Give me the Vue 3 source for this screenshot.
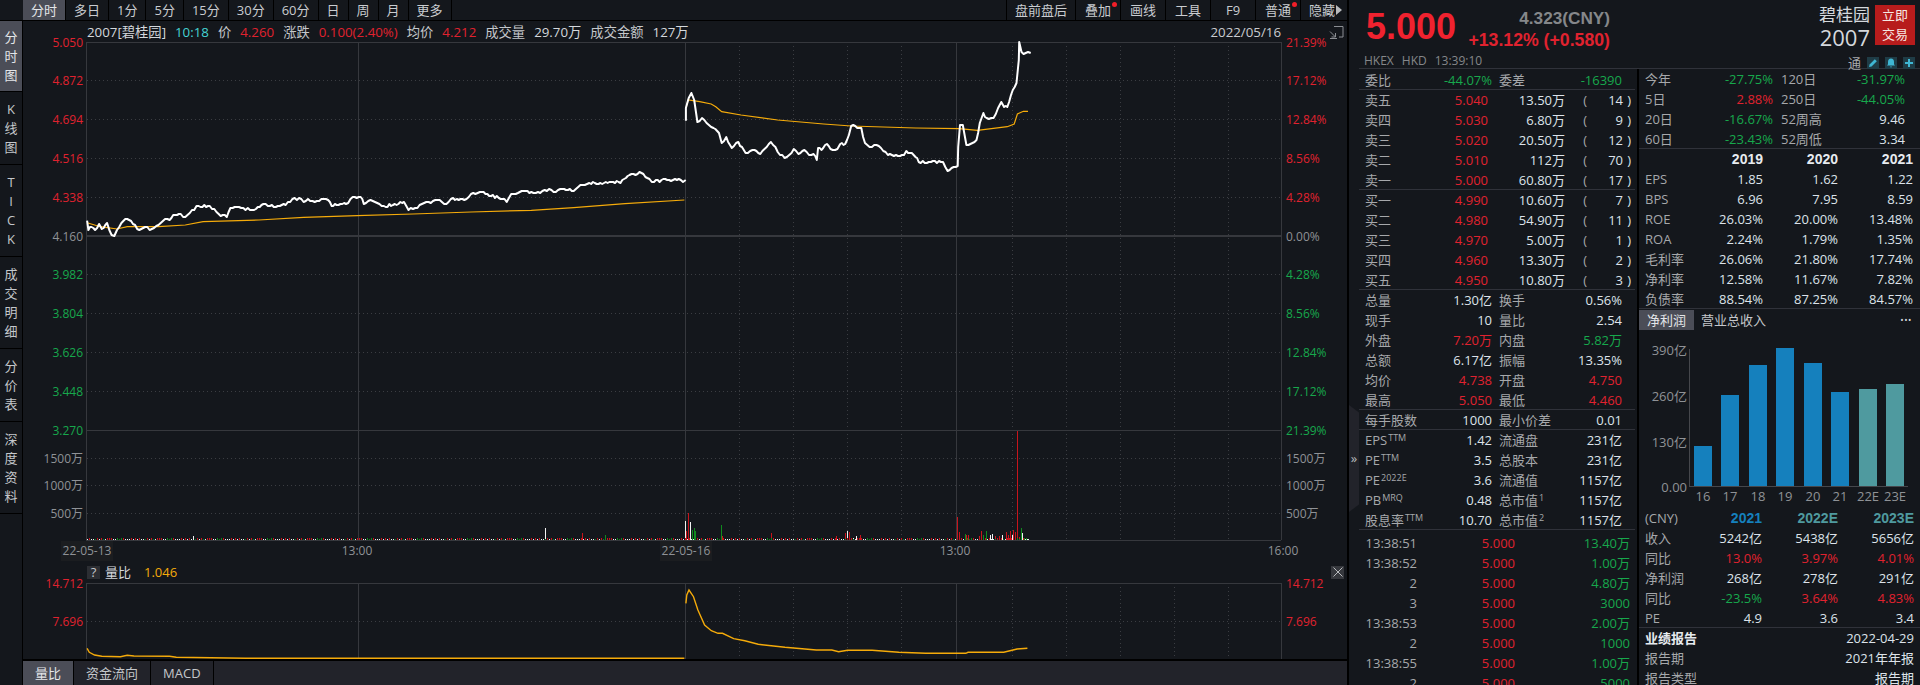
<template>
  <div class="screen">
    <div class="left">
      <div class="toolbar">
        <div class="tools">
          <span v-for="(t, i) in periods" :key="t" class="tool" :class="{ on: i === 0 }">{{ t }}</span>
        </div>
        <div class="tools right-tools">
          <span class="tool">盘前盘后</span>
          <span class="tool wide dot">叠加</span>
          <span class="tool wide">画线</span>
          <span class="tool wide">工具</span>
          <span class="tool wide">F9</span>
          <span class="tool wide dot">普通</span>
          <span class="tool wide hide">隐藏<i class="tri"></i></span>
        </div>
      </div>
      <div class="work">
        <div class="sidebar">
          <div
            v-for="(s, i) in sideTabs"
            :key="s.text"
            class="side-tab"
            :class="{ on: i === 0 }"
            :style="{ height: s.h + 'px' }"
          >
            <span v-for="(c, j) in s.text" :key="j">{{ c }}</span>
          </div>
        </div>
        <div class="center">
          <div class="info">
            <span class="w">2007[碧桂园]</span>
            <span class="cyan">10:18</span>
            <span>价</span><span class="red">4.260</span>
            <span>涨跌</span><span class="red">0.100(2.40%)</span>
            <span>均价</span><span class="red">4.212</span>
            <span>成交量</span><span class="w">29.70万</span>
            <span>成交金额</span><span class="w">127万</span>
            <span class="date">2022/05/16</span>
            <svg class="screen-ico" width="15" height="14" viewBox="0 0 15 14" fill="none" stroke="#8b8e93">
              <path d="M5 1.5h9v10.5h-4M1 13.5h7M1 6.5l5.5 5.5M6.5 8v4h-4" />
            </svg>
          </div>

          <svg class="plot" width="1324" height="519" viewBox="23 42 1324 519">
            <rect x="61" y="541" width="52" height="20" fill="#1b1d20" />
            <rect x="660" y="541" width="52" height="20" fill="#1b1d20" />
            <line v-for="y in dottedY" :key="y" x1="87" x2="1281" :y1="y" :y2="y" class="dots" />
            <line v-for="x in dottedX" :key="x" :x1="x" :x2="x" y1="42" y2="540" class="dots" />
            <line v-for="x in solidX" :key="x" :x1="x" :x2="x" y1="42" y2="540" class="solid" />
            <line x1="86" x2="1281" y1="42.5" y2="42.5" class="solid" />
            <line x1="86" x2="1281" y1="236" y2="236" class="solid thick" />
            <line x1="86" x2="1281" y1="430.5" y2="430.5" class="solid" />
            <line x1="86" x2="1281" y1="540.5" y2="540.5" class="solid" />

            <polyline :points="avgA" class="avg" />
            <polyline :points="avgB" class="avg" />
            <polyline :points="priceA" class="price" />
            <polyline :points="priceB" class="price" />

            <path :d="bars.w" stroke="#f2f2f2" class="bar" />
            <path :d="bars.r" stroke="#c8141c" class="bar" />
            <path :d="bars.g" stroke="#108a1e" class="bar" />

            <text v-for="l in leftAxis" :key="l.y" x="83" :y="l.y" text-anchor="end" class="lbl" :fill="l.c">{{ l.t }}</text>
            <text v-for="l in rightAxis" :key="l.y" x="1286" :y="l.y" class="lbl" :fill="l.c">{{ l.t }}</text>
            <text v-for="l in timeAxis" :key="l.x" :x="l.x" y="550" text-anchor="middle" class="lbl" fill="#8f9296">{{ l.t }}</text>
          </svg>

          <div class="subhead">
            <span class="q">?</span>
            <span class="w">量比</span>
            <span class="gold">1.046</span>
            <span class="x-btn">
              <svg width="10" height="10" viewBox="0 0 10 10" stroke="#b8babd" fill="none"><path d="M0.5 0.5l9 9M9.5 0.5l-9 9" /></svg>
            </span>
          </div>

          <svg class="plot" width="1324" height="78" viewBox="23 583 1324 78">
            <line x1="87" x2="1281" y1="621.5" y2="621.5" class="dots" />
            <line v-for="x in dottedX" :key="x" :x1="x" :x2="x" y1="583" y2="659" class="dots" />
            <line v-for="x in solidX" :key="x" :x1="x" :x2="x" y1="583" y2="659" class="solid" />
            <line x1="86" x2="1281" y1="583.5" y2="583.5" class="solid" />
            <polyline :points="ratioA" class="ratio" />
            <polyline :points="ratioB" class="ratio" />
            <text x="83" y="583.5" text-anchor="end" class="lbl" fill="#e0222f">14.712</text>
            <text x="83" y="621.5" text-anchor="end" class="lbl" fill="#e0222f">7.696</text>
            <text x="1286" y="583.5" class="lbl" fill="#e0222f">14.712</text>
            <text x="1286" y="621.5" class="lbl" fill="#e0222f">7.696</text>
          </svg>

          <div class="bottom-tabs">
            <span class="btab on">量比</span>
            <span class="btab">资金流向</span>
            <span class="btab">MACD</span>
          </div>
        </div>
      </div>
    </div>

    <div class="panel">
      <div class="gutter"><span class="handle">»</span></div>
      <div class="panel-main">
        <div class="quote">
          <div class="quote-left">
            <div class="quote-top">
              <span class="big">5.000</span>
              <div class="quote-sub">
                <span class="cny">4.323(CNY)</span>
                <span class="chg">+13.12% (+0.580)</span>
              </div>
            </div>
            <div class="market"><span>HKEX</span><span>HKD</span><span>13:39:10</span></div>
          </div>
          <div class="quote-right">
            <div class="name-line">
              <div class="name">
                <span class="cn">碧桂园</span>
                <span class="code">2007</span>
              </div>
              <div class="trade">立即<br />交易</div>
            </div>
            <div class="icons">
              <span class="tong">通</span>
              <span class="ico">
                <svg width="12" height="12" viewBox="0 0 12 12" fill="#3fb6d3"><path d="M2 10l0.6-2.6L7.8 2.2l2 2L4.6 9.4z" /></svg>
              </span>
              <span class="ico">
                <svg width="12" height="12" viewBox="0 0 12 12" fill="#3fb6d3"><path d="M6 1.5c2 0 3 1.5 3 3.4v2.3l1 1.3H2l1-1.3V4.900C3 3 4 1.500 6 1.500zM5 9.500h2l-1 1.200z" /></svg>
              </span>
              <span class="ico">
                <svg width="12" height="12" viewBox="0 0 12 12" fill="#3fb6d3"><path d="M5 2h2v3h3v2H7v3H5V7H2V5h3z" /></svg>
              </span>
            </div>
          </div>
        </div>

        <div class="cols">
          <div class="col-a">
            <div class="sec">
              <div class="row stat">
                <span class="k">委比</span><span class="v green">-44.07%</span>
                <span class="k">委差</span><span class="v green">-16390</span>
              </div>
            </div>
            <div v-for="(group, g) in book" :key="g" class="sec">
              <div v-for="r in group" :key="r[0]" class="row order">
                <span class="k">{{ r[0] }}</span>
                <span class="v red">{{ r[1] }}</span>
                <span class="v">{{ r[2] }}</span>
                <span class="k paren">(</span>
                <span class="v">{{ r[3] }}</span>
                <span class="v">)</span>
              </div>
            </div>
            <div class="sec">
              <div v-for="r in stats" :key="r[0]" class="row stat">
                <span class="k">{{ r[0] }}</span><span class="v" :class="r[2]">{{ r[1] }}</span>
                <span class="k">{{ r[3] }}</span><span class="v" :class="r[5]">{{ r[4] }}</span>
              </div>
            </div>
            <div class="sec">
              <div class="row stat">
                <span class="k">每手股数</span><span class="v">1000</span>
                <span class="k">最小价差</span><span class="v">0.01</span>
              </div>
            </div>
            <div class="sec">
              <div v-for="r in ratios" :key="r[0] + r[1]" class="row stat">
                <span class="k">{{ r[0] }}<sup>{{ r[1] }}</sup></span><span class="v">{{ r[2] }}</span>
                <span class="k">{{ r[3] }}<sup>{{ r[4] }}</sup></span><span class="v">{{ r[5] }}</span>
              </div>
            </div>
            <div class="ticks">
              <div v-for="(r, i) in ticks" :key="i" class="row tick">
                <span class="k">{{ r[0] }}</span>
                <span class="v red">5.000</span>
                <span class="v green">{{ r[1] }}</span>
              </div>
            </div>
          </div>

          <div class="col-b">
            <div class="sec">
              <div v-for="r in periodsPct" :key="r[0]" class="row stat-b">
                <span class="k">{{ r[0] }}</span><span class="v" :class="r[2]">{{ r[1] }}</span>
                <span class="k">{{ r[3] }}</span><span class="v" :class="r[5]">{{ r[4] }}</span>
              </div>
            </div>
            <div class="sec">
              <div class="row fin">
                <span></span><span class="v strong">2019</span><span class="v strong">2020</span><span class="v strong">2021</span>
              </div>
              <div v-for="r in finance" :key="r[0]" class="row fin">
                <span class="k">{{ r[0] }}</span><span class="v">{{ r[1] }}</span><span class="v">{{ r[2] }}</span><span class="v">{{ r[3] }}</span>
              </div>
            </div>
            <div class="chart-tabs">
              <span class="ctab on">净利润</span>
              <span class="ctab">营业总收入</span>
              <span class="more">•••</span>
            </div>
            <svg class="bars" width="281" height="178" viewBox="1639 330 281 178">
              <text v-for="l in barAxis" :key="l.t" x="1687" :y="l.y" text-anchor="end" class="blbl">{{ l.t }}</text>
              <line x1="1689.5" x2="1689.5" y1="349" y2="486" stroke="#45474c" />
              <line x1="1689" x2="1908" y1="486.5" y2="486.5" stroke="#45474c" />
              <rect
                v-for="b in barData"
                :key="b.t"
                :x="b.x"
                :y="b.y"
                width="18"
                :height="486 - b.y"
                :fill="b.est ? '#4f9a9f' : '#1580bd'"
              />
              <text v-for="b in barData" :key="'l' + b.t" :x="b.x + 9" y="496" text-anchor="middle" class="blbl">{{ b.t }}</text>
            </svg>
            <div class="sec">
              <div class="row tbl">
                <span class="k">(CNY)</span>
                <span class="v strong blue">2021</span><span class="v strong teal">2022E</span><span class="v strong teal">2023E</span>
              </div>
              <div v-for="(r, i) in forecast" :key="i" class="row tbl">
                <span class="k">{{ r[0] }}</span>
                <span class="v" :class="r[4]">{{ r[1] }}</span>
                <span class="v" :class="r[5]">{{ r[2] }}</span>
                <span class="v" :class="r[5]">{{ r[3] }}</span>
              </div>
            </div>
            <div class="report">
              <div class="row rep"><span class="w strong-cn">业绩报告</span><span class="v">2022-04-29</span></div>
              <div class="row rep"><span class="k">报告期</span><span class="v">2021年年报</span></div>
              <div class="row rep"><span class="k">报告类型</span><span class="v">报告期</span></div>
            </div>
          </div>
        </div>
      </div>
    </div>
  </div>
</template>

<script setup>
const periods = ['分时', '多日', '1分', '5分', '15分', '30分', '60分', '日', '周', '月', '更多']
const sideTabs = [
  { text: '分时图', h: 71 },
  { text: 'K线图', h: 73 },
  { text: 'TICK', h: 92 },
  { text: '成交明细', h: 92 },
  { text: '分价表', h: 73 },
  { text: '深度资料', h: 92 },
]

const RED = '#e0222f'
const GREEN = '#17a84c'
const GREY = '#8f9296'
const dottedY = [80.5, 119.5, 158.5, 197.5, 274.5, 313.5, 352.5, 391.5, 458.5, 485.5, 513.5]
const dottedX = [739.5, 793.5, 847.5, 901.5, 1012.5, 1066.5, 1120.5, 1174.5, 1228.5]
const solidX = [86.5, 358.5, 685.5, 956.5, 1281.5]

const leftAxis = [
  { y: 42, t: '5.050', c: RED }, { y: 80.5, t: '4.872', c: RED }, { y: 119, t: '4.694', c: RED },
  { y: 158, t: '4.516', c: RED }, { y: 197, t: '4.338', c: RED }, { y: 236, t: '4.160', c: GREY },
  { y: 274, t: '3.982', c: GREEN }, { y: 313, t: '3.804', c: GREEN }, { y: 352, t: '3.626', c: GREEN },
  { y: 391, t: '3.448', c: GREEN }, { y: 430, t: '3.270', c: GREEN },
  { y: 458, t: '1500万', c: GREY }, { y: 485, t: '1000万', c: GREY }, { y: 513, t: '500万', c: GREY },
]
const rightAxis = [
  { y: 42, t: '21.39%', c: RED }, { y: 80.5, t: '17.12%', c: RED }, { y: 119, t: '12.84%', c: RED },
  { y: 158, t: '8.56%', c: RED }, { y: 197, t: '4.28%', c: RED }, { y: 236, t: '0.00%', c: GREY },
  { y: 274, t: '4.28%', c: GREEN }, { y: 313, t: '8.56%', c: GREEN }, { y: 352, t: '12.84%', c: GREEN },
  { y: 391, t: '17.12%', c: GREEN }, { y: 430, t: '21.39%', c: GREEN },
  { y: 458, t: '1500万', c: GREY }, { y: 485, t: '1000万', c: GREY }, { y: 513, t: '500万', c: GREY },
]
const timeAxis = [
  { x: 87, t: '22-05-13' }, { x: 357, t: '13:00' }, { x: 686, t: '22-05-16' }, { x: 955, t: '13:00' }, { x: 1283, t: '16:00' },
]

// traced from the crops: pairs of crop x,y turned back into page coordinates
const toPts = (raw, ox, sx) => {
  const out = []
  for (let i = 0; i < raw.length; i += 2) {
    out.push(`${(ox + raw[i] / sx).toFixed(1)},${(raw[i + 1] / 3).toFixed(1)}`)
  }
  return out.join(' ')
}
const toSub = (raw, ox) => {
  const out = []
  for (let i = 0; i < raw.length; i += 2) {
    out.push(`${(ox + raw[i] / 2.24).toFixed(1)},${(400 + raw[i + 1] / 3).toFixed(1)}`)
  }
  return out.join(' ')
}

// the price ticks every couple of pixels, so resample the trace and let it wobble
let wobble = 3
const rough = (line) => {
  const pts = line.split(' ').map((p) => p.split(',').map(Number))
  const out = [pts[0].join(',')]
  for (let i = 1; i < pts.length; i++) {
    const [x0, y0] = pts[i - 1]
    const [x1, y1] = pts[i]
    const n = Math.max(1, Math.round((x1 - x0) / 2))
    for (let k = 1; k <= n; k++) {
      wobble = (wobble * 37 + 17) % 97
      const off = k < n ? (wobble % 3) - 1 : 0
      const x = x0 + ((x1 - x0) * k) / n
      const y = Math.round(y0 + ((y1 - y0) * k) / n + off)
      out.push(`${x.toFixed(1)},${y}`)
    }
  }
  return out.join(' ')
}

const priceA = rough(toPts([
  195,662, 198,690, 205,680, 213,690, 222,672, 228,688, 240,668, 250,705, 256,708, 262,690, 272,668, 285,658,
  298,672, 312,690, 325,682, 340,688, 355,675, 365,662, 380,660, 388,645, 405,643, 415,650, 430,630, 445,617,
  470,617, 490,643, 508,650, 516,625, 545,625, 565,630, 590,612, 600,618, 640,615, 655,597, 675,597, 680,605,
  690,598, 705,605, 720,598, 735,600, 743,618, 750,612, 775,612, 790,592, 808,590, 815,612, 830,600, 840,605,
  860,618, 880,615, 905,605, 915,630, 930,625, 950,610, 965,608, 985,600, 1000,612, 1015,595, 1040,600, 1060,580,
  1075,575, 1100,588, 1130,598, 1135,605, 1145,582, 1160,578, 1190,575, 1210,578, 1230,566, 1240,575, 1255,568,
  1285,572, 1300,555, 1320,548, 1345,550, 1365,545, 1390,548, 1410,525, 1437,518, 1450,535, 1465,545, 1490,538,
  1525,540, 1530,545, 1536,540,
], 0, 2.24))
const priceB = rough(toPts([
  100,362, 100,325, 106,295, 112,278, 118,300, 125,365, 135,355, 150,375, 160,385, 172,400, 178,430, 188,410,
  200,445, 214,425, 230,460, 245,450, 262,462, 285,425, 295,440, 305,465, 320,472, 335,448, 345,462, 358,450,
  368,465, 378,462, 385,480, 388,445, 395,450, 407,432, 415,447, 430,447, 436,432, 447,432, 455,405, 460,378,
  482,385, 490,430, 505,440, 515,435, 525,445, 540,465, 575,465, 580,452, 600,470, 607,485, 660,485, 670,512,
  692,498, 693,440, 697,375, 703,375, 711,435, 733,420, 740,370, 748,340, 755,355, 770,355, 780,325, 787,305,
  793,320, 800,320, 808,285, 820,250, 825,180, 826,127, 831,157, 840,160, 845,155, 851,160,
], 640, 2.178))
const avgA = toPts([
  195,668, 225,680, 262,687, 285,680, 355,680, 415,675, 455,665, 580,660, 680,652, 800,647, 925,642, 1055,636,
  1190,631, 1285,623, 1400,611, 1533,600,
], 0, 2.24)
const avgB = toPts([
  100,325, 105,300, 130,305, 155,312, 165,320, 178,335, 220,345, 300,360, 400,372, 460,378, 600,384, 695,386,
  735,391, 800,380, 815,372, 822,342, 835,334, 845,334,
], 640, 2.178)
const ratioA = toSub([
  195,745, 200,757, 212,765, 228,769, 270,770, 285,766, 300,768, 380,769, 395,772, 550,775, 1533,775,
], 0)
const ratioB = toSub([
  58,610, 60,585, 65,570, 75,590, 85,630, 100,675, 115,692, 130,700, 140,700, 165,716, 190,722, 220,733, 280,742,
  350,750, 385,750, 400,755, 420,751, 475,751, 535,757, 595,760, 685,760, 690,757, 770,757, 800,747, 823,745,
], 660)

const tallBars = [
  [193, 4, 'w'], [545, 12, 'w'], [582, 7, 'r'], [605, 5, 'g'],
  [685, 19, 'w'], [686, 9, 'r'], [688, 27, 'r'], [690, 18, 'w'], [692, 10, 'g'], [694, 12, 'g'], [695, 9, 'g'],
  [721, 15, 'g'], [722, 4, 'r'], [771, 7, 'r'], [836, 4, 'r'], [845, 7, 'r'], [847, 9, 'w'], [849, 8, 'r'],
  [853, 2, 'w'], [856, 4, 'w'], [860, 5, 'r'], [957, 23, 'r'], [959, 8, 'r'], [965, 6, 'g'], [966, 5, 'r'],
  [968, 5, 'r'], [979, 4, 'r'], [981, 9, 'r'], [983, 5, 'g'], [986, 9, 'g'], [990, 5, 'w'], [992, 6, 'w'],
  [995, 4, 'r'], [999, 4, 'r'], [1002, 5, 'w'], [1006, 8, 'r'], [1008, 5, 'r'], [1010, 9, 'r'], [1012, 5, 'w'],
  [1013, 10, 'r'], [1015, 8, 'r'], [1017, 109, 'r'], [1019, 3, 'r'], [1021, 12, 'g'], [1022, 7, 'w'],
  [1024, 2, 'g'], [1026, 2, 'g'], [1028, 1, 'w'],
]
const bars = { w: '', r: '', g: '' }
let seed = 7
for (let x = 87; x < 1028; x += 2) {
  seed = (seed * 31 + 11) % 101
  const kind = seed % 5 === 0 ? 'g' : seed % 2 === 0 ? 'w' : 'r'
  bars[kind] += `M${x + 0.5} 540v-${1 + (seed % 2)}`
}
for (const [x, h, kind] of tallBars) bars[kind] += `M${x + 0.5} 540v-${h}`

const book = [
  [
    ['卖五', '5.040', '13.50万', '14'],
    ['卖四', '5.030', '6.80万', '9'],
    ['卖三', '5.020', '20.50万', '12'],
    ['卖二', '5.010', '112万', '70'],
    ['卖一', '5.000', '60.80万', '17'],
  ],
  [
    ['买一', '4.990', '10.60万', '7'],
    ['买二', '4.980', '54.90万', '11'],
    ['买三', '4.970', '5.00万', '1'],
    ['买四', '4.960', '13.30万', '2'],
    ['买五', '4.950', '10.80万', '3'],
  ],
]
const stats = [
  ['总量', '1.30亿', '', '换手', '0.56%', ''],
  ['现手', '10', '', '量比', '2.54', ''],
  ['外盘', '7.20万', 'red', '内盘', '5.82万', 'green'],
  ['总额', '6.17亿', '', '振幅', '13.35%', ''],
  ['均价', '4.738', 'red', '开盘', '4.750', 'red'],
  ['最高', '5.050', 'red', '最低', '4.460', 'red'],
]
const ratios = [
  ['EPS', 'TTM', '1.42', '流通盘', '', '231亿'],
  ['PE', 'TTM', '3.5', '总股本', '', '231亿'],
  ['PE', '2022E', '3.6', '流通值', '', '1157亿'],
  ['PB', 'MRQ', '0.48', '总市值', '1', '1157亿'],
  ['股息率', 'TTM', '10.70', '总市值', '2', '1157亿'],
]
const ticks = [
  ['13:38:51', '13.40万'], ['13:38:52', '1.00万'], ['2', '4.80万'], ['3', '3000'],
  ['13:38:53', '2.00万'], ['2', '1000'], ['13:38:55', '1.00万'], ['2', '5000'],
]
const periodsPct = [
  ['今年', '-27.75%', 'green', '120日', '-31.97%', 'green'],
  ['5日', '2.88%', 'red', '250日', '-44.05%', 'green'],
  ['20日', '-16.67%', 'green', '52周高', '9.46', ''],
  ['60日', '-23.43%', 'green', '52周低', '3.34', ''],
]
const finance = [
  ['EPS', '1.85', '1.62', '1.22'],
  ['BPS', '6.96', '7.95', '8.59'],
  ['ROE', '26.03%', '20.00%', '13.48%'],
  ['ROA', '2.24%', '1.79%', '1.35%'],
  ['毛利率', '26.06%', '21.80%', '17.74%'],
  ['净利率', '12.58%', '11.67%', '7.82%'],
  ['负债率', '88.54%', '87.25%', '84.57%'],
]
const barAxis = [
  { t: '390亿', y: 350 }, { t: '260亿', y: 396 }, { t: '130亿', y: 442 }, { t: '0.00', y: 487 },
]
const barData = [
  { t: '16', x: 1694, y: 446 }, { t: '17', x: 1721, y: 395 }, { t: '18', x: 1749, y: 365 }, { t: '19', x: 1776, y: 348 },
  { t: '20', x: 1804, y: 363 }, { t: '21', x: 1831, y: 392 }, { t: '22E', x: 1859, y: 389, est: true }, { t: '23E', x: 1886, y: 384, est: true },
]
const forecast = [
  ['收入', '5242亿', '5438亿', '5656亿', '', ''],
  ['同比', '13.0%', '3.97%', '4.01%', 'red', 'red'],
  ['净利润', '268亿', '278亿', '291亿', '', ''],
  ['同比', '-23.5%', '3.64%', '4.83%', 'green', 'red'],
  ['PE', '4.9', '3.6', '3.4', '', ''],
]
</script>

<style>
html, body {
  margin: 0;
  background: #14171c;
}
</style>

<style scoped>
.screen {
  display: flex;
  width: 1920px;
  height: 685px;
  overflow: hidden;
  background: #14171c;
  color: #a6a8ab;
  font: 13px/20px "Open Sans", "Noto Sans CJK SC", sans-serif;
}
.left {
  width: 1347px;
  flex: none;
  display: flex;
  flex-direction: column;
}
.toolbar {
  height: 21px;
  flex: none;
  box-sizing: border-box;
  display: flex;
  justify-content: space-between;
  padding-left: 23px;
  border-bottom: 1px solid #000;
}
.tools { display: flex; }
.tool {
  position: relative;
  padding: 0 8px;
  border-right: 1px solid #000;
  color: #c9ccd0;
  line-height: 20px;
}
.tool.on { background: #4b4d57; color: #e4e6e9; }
.right-tools .tool:first-child { border-left: 1px solid #000; }
.tool.wide {
  width: 44px;
  padding: 0;
  text-align: center;
}
.tool.dot::after {
  content: "";
  position: absolute;
  top: 2px;
  right: 3px;
  width: 5px;
  height: 5px;
  border-radius: 50%;
  background: #f01e28;
}
.tool.hide {
  width: 46px;
  border-right: 0;
  display: flex;
  align-items: center;
  padding-left: 8px;
  box-sizing: border-box;
  text-align: left;
}
.tri {
  margin-left: 1px;
  border-left: 6px solid #b8babd;
  border-top: 5px solid transparent;
  border-bottom: 5px solid transparent;
}
.work {
  flex: 1;
  display: flex;
  min-height: 0;
}
.sidebar {
  width: 23px;
  flex: none;
  box-sizing: border-box;
  border-right: 1px solid #000;
  display: flex;
  flex-direction: column;
}
.side-tab {
  flex: none;
  box-sizing: border-box;
  border-bottom: 1px solid #000;
  display: flex;
  flex-direction: column;
  align-items: center;
  justify-content: center;
  font-size: 13px;
  line-height: 19px;
  color: #c4c7cb;
}
.side-tab.on { background: #4b4d57; color: #e4e6e9; }
.center {
  width: 1324px;
  display: flex;
  flex-direction: column;
}
.info {
  height: 21px;
  flex: none;
  box-sizing: border-box;
  padding: 1px 0 0 64px;
  display: flex;
  align-items: center;
  gap: 9px;
  color: #c4c7cb;
  font-size: 13.3px;
}
.date { margin-left: auto; color: #c9ccd0; }
.screen-ico { margin: 0 3px 0 39px; }
.w { color: #d4d8dc; }
.cyan { color: #45d3d3; }
.red { color: #e0222f; }
.green { color: #17a84c; }
.gold { color: #f5ab0a; }
.plot {
  display: block;
  flex: none;
  overflow: visible;
}
.dots {
  stroke: #3b3d42;
  stroke-dasharray: 1 3;
}
.solid { stroke: #36383d; }
.thick { stroke-width: 2; }
.price {
  fill: none;
  stroke: #fff;
  stroke-width: 2;
  stroke-linejoin: round;
}
.avg {
  fill: none;
  stroke: #f5ab0a;
  stroke-width: 1.2;
}
.ratio {
  fill: none;
  stroke: #f5ab0a;
  stroke-width: 1.4;
}
.bar { fill: none; shape-rendering: crispEdges; }
.lbl {
  font-size: 12px;
  dominant-baseline: central;
}
.subhead {
  height: 22px;
  flex: none;
  box-sizing: border-box;
  padding: 0 3px 0 64px;
  display: flex;
  align-items: center;
  gap: 5px;
}
.subhead .gold { margin-left: 8px; }
.q {
  width: 13px;
  height: 13px;
  background: #2c2e33;
  color: #c4c7cb;
  text-align: center;
  line-height: 13px;
}
.x-btn {
  margin-left: auto;
  width: 13px;
  height: 13px;
  background: #36383d;
  display: flex;
  align-items: center;
  justify-content: center;
}
.bottom-tabs {
  flex: none;
  height: 26px;
  margin-top: -2px;
  box-sizing: border-box;
  border-top: 2px solid #000;
  background: #22232a;
  display: flex;
}
.btab {
  padding: 0 12px;
  border-right: 1px solid #000;
  line-height: 24px;
  color: #c4c7cb;
}
.btab.on { background: #4b4d57; color: #e4e6e9; }
.panel {
  flex: 1;
  display: flex;
  border-left: 2px solid #000;
  min-width: 0;
}
.gutter {
  width: 10px;
  flex: none;
  position: relative;
}
.handle {
  position: absolute;
  top: 405px;
  left: 0;
  width: 10px;
  height: 107px;
  background: #22232a;
  clip-path: polygon(0 0, 100% 7%, 100% 93%, 0 100%);
  color: #b8babd;
  font-size: 13px;
  line-height: 107px;
  text-align: center;
}
.panel-main {
  flex: 1;
  min-width: 0;
  display: flex;
  flex-direction: column;
}
.quote {
  height: 69px;
  flex: none;
  box-sizing: border-box;
  border-bottom: 1px solid #30323a;
  display: flex;
  justify-content: space-between;
  padding: 0 5px 0 5px;
}
.quote-top {
  display: flex;
  align-items: center;
  height: 50px;
  padding: 3px 0 0 2px;
  box-sizing: border-box;
}
.big {
  font: bold 36px/50px "Liberation Sans", sans-serif;
  color: #f0222f;
  width: 102px;
}
.quote-sub {
  width: 142px;
  display: flex;
  flex-direction: column;
  align-items: flex-end;
  font: bold 17.2px/22px "Liberation Sans", sans-serif;
  padding-top: 4px;
}
.cny { color: #85878a; }
.chg { color: #e0222f; font-size: 17.7px; white-space: nowrap; }
.market {
  display: flex;
  gap: 8px;
  color: #85878a;
  font-size: 12px;
  line-height: 22px;
}
.quote-right { display: flex; flex-direction: column; align-items: flex-end; padding-top: 5px; }
.name-line { display: flex; gap: 5px; }
.name {
  display: flex;
  flex-direction: column;
  align-items: flex-end;
  color: #d4d8dc;
}
.cn { font-size: 17px; line-height: 20px; }
.code { font-size: 22px; line-height: 24px; }
.trade {
  width: 40px;
  height: 40px;
  background: #b71c1c;
  color: #f6e9e4;
  text-align: center;
  font-size: 13px;
  line-height: 19px;
  padding-top: 1px;
  box-sizing: border-box;
}
.icons {
  display: flex;
  align-items: center;
  gap: 6px;
  margin-top: 8px;
  height: 12px;
}
.tong { color: #a6a8ab; }
.ico {
  width: 12px;
  height: 12px;
  background: #1f3c46;
  display: flex;
}
.cols {
  flex: 1;
  min-height: 0;
  display: flex;
  padding-top: 1px;
}
.col-a {
  width: 276px;
  flex: none;
  margin-right: 2px;
}
.col-b {
  flex: 1;
  min-width: 0;
  border-left: 2px solid #000;
  margin-top: -1px;
}
.sec { box-shadow: inset 0 -1px 0 #30323a; }
.row {
  height: 20px;
  line-height: 20px;
  display: grid;
  white-space: nowrap;
}
.k { color: #a6a8ab; }
.v { text-align: right; color: #dde3ea; }
.v.red { color: #e0222f; }
.v.green { color: #17a84c; }
.col-a .row { padding-left: 6px; }
.order { grid-template-columns: 30px 93px 77px 22px 36px 8px; }
.paren { text-align: right; }
.stat { grid-template-columns: 62px 65px 70px 60px; }
.stat .k:nth-child(3) { padding-left: 7px; }
sup {
  font-size: 9px;
  line-height: 0;
  vertical-align: 4px;
  margin-left: 1px;
}
.ticks { padding-top: 3px; }
.tick { grid-template-columns: 52px 98px 115px; }
.tick .k { text-align: right; }
.col-b .row { padding-left: 6px; }
.stat-b { grid-template-columns: 50px 78px 60px 72px; }
.stat-b .k:nth-child(3) { padding-left: 8px; }
.fin { grid-template-columns: 48px 70px 75px 75px; }
.strong {
  font: bold 14px/20px "Liberation Sans", sans-serif;
  color: #e7ebef;
}
.chart-tabs {
  height: 21px;
  padding-top: 1px;
  box-sizing: border-box;
  display: flex;
}
.ctab { padding: 0 8px; line-height: 20px; color: #c4c7cb; }
.ctab.on { background: #4b4d57; color: #e4e6e9; width: 39px; margin-right: -1px; }
.more {
  margin-left: auto;
  margin-right: 8px;
  color: #d4d8dc;
  font-size: 9px;
  letter-spacing: 0.5px;
}
.bars { display: block; margin-top: 0; }
.blbl {
  font-size: 13px;
  fill: #8f9296;
  dominant-baseline: central;
}
.tbl { grid-template-columns: 48px 69px 76px 76px; }
.strong.blue { color: #1580bd; }
.strong.teal { color: #4f9a9f; }
.rep { grid-template-columns: 1fr auto; padding-right: 6px; }
.strong-cn { font-weight: 700; color: #e7ebef; }
</style>
